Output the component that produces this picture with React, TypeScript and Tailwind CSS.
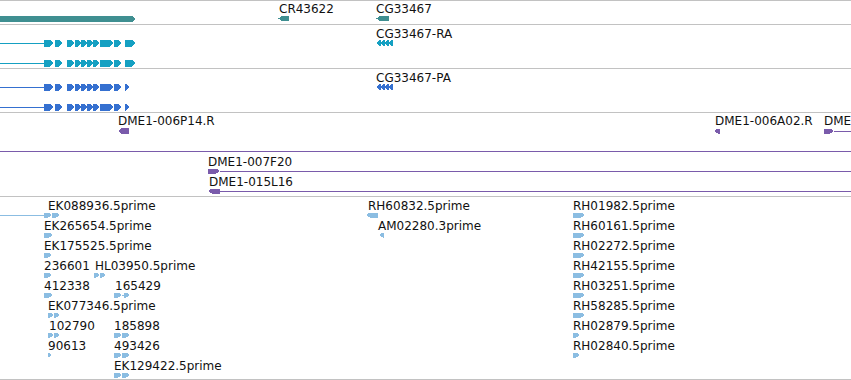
import type { ReactNode } from 'react'

const GENE = '#3f8f91'
const RA = '#15a0c2'
const PA = '#3570d0'
const CLONE = '#7a5bab'
const EST = '#8bbde2'

// pentagon arrow pointing right / left
function fwd(x1: number, x2: number, yc: number, h = 6) {
  const head = Math.min(4, x2 - x1)
  const t = yc - h / 2
  const b = yc + h / 2
  return `${x1},${t} ${x2 - head},${t} ${x2},${yc} ${x2 - head},${b} ${x1},${b}`
}

function rev(x1: number, x2: number, yc: number, h = 6) {
  const head = Math.min(4, x2 - x1)
  const t = yc - h / 2
  const b = yc + h / 2
  return `${x2},${t} ${x1 + head},${t} ${x1},${yc} ${x1 + head},${b} ${x2},${b}`
}

const EXONS: [number, number][] = [
  [44, 54], [55, 63], [67, 75], [75, 82], [81, 88], [87, 94], [93, 100], [100, 114], [114, 122], [125, 136],
]
const EXONS_PA: [number, number][] = [...EXONS.slice(0, 9), [125, 130]]
const LABEL_ARROWS: [number, number][] = [[376, 381], [380, 385], [384, 389], [388, 393]]

type Lbl = { x: number; base: number; text: string }

function Track({ top, h, hClass, last, labels, children }: { top: number; h: number; hClass: string; last?: boolean; labels: Lbl[]; children: ReactNode }) {
  return (
    <div className={`relative w-full overflow-hidden border-t border-[#c2c2c2] ${hClass} ${last ? 'border-b' : ''}`}>
      <svg
        className="absolute left-0 top-[-1px]"
        width={851}
        height={h}
        viewBox={`0 ${top} 851 ${h}`}
        shapeRendering="crispEdges"
      >
        {children}
      </svg>
      {labels.map((l) => (
        <span
          key={l.text + l.x}
          className="absolute whitespace-nowrap text-[12px] leading-[14px] text-[#111]"
          style={{ left: l.x, top: l.base - 11 - top - 1 }}
        >
          {l.text}
        </span>
      ))}
    </div>
  )
}

function Transcript({ exons, yc, color }: { exons: [number, number][]; yc: number; color: string }) {
  return (
    <g fill={color}>
      <rect x={0} y={yc - 0.5} width={44} height={1.2} />
      {exons.map(([a, b]) => (
        <polygon key={a} points={fwd(a, b, yc, 7)} />
      ))}
    </g>
  )
}

const EST_LEFT: Lbl[] = [
  { x: 48, base: 210, text: 'EK088936.5prime' },
  { x: 44, base: 230, text: 'EK265654.5prime' },
  { x: 44, base: 250, text: 'EK175525.5prime' },
  { x: 44, base: 270, text: '236601' },
  { x: 95, base: 270, text: 'HL03950.5prime' },
  { x: 44, base: 290, text: '412338' },
  { x: 115, base: 290, text: '165429' },
  { x: 48, base: 310, text: 'EK077346.5prime' },
  { x: 49, base: 330, text: '102790' },
  { x: 114, base: 330, text: '185898' },
  { x: 48, base: 350, text: '90613' },
  { x: 114, base: 350, text: '493426' },
  { x: 114, base: 370, text: 'EK129422.5prime' },
  { x: 368, base: 210, text: 'RH60832.5prime' },
  { x: 378, base: 230, text: 'AM02280.3prime' },
]

const RH = ['RH01982.5prime', 'RH60161.5prime', 'RH02272.5prime', 'RH42155.5prime', 'RH03251.5prime', 'RH58285.5prime', 'RH02879.5prime', 'RH02840.5prime']

// est glyphs: [x1, x2, row]
const EST_SHAPES: [number, number, number][] = [
  [44, 52, 0], [52, 60, 0],
  [44, 53, 1],
  [44, 52, 2],
  [44, 52, 3], [94, 100, 3], [100, 106, 3],
  [44, 53, 4], [114, 122, 4], [124, 130, 4],
  [48, 54, 5], [54, 60, 5],
  [48, 54, 6], [54, 60, 6], [114, 122, 6], [122, 130, 6],
  [48, 52, 7], [114, 122, 7], [122, 130, 7],
  [114, 122, 8], [122, 130, 8],
]

export default function App() {
  return (
    <div className="w-[851px] h-[380px] bg-white overflow-hidden font-['DejaVu_Sans',sans-serif]">
      <Track
        top={0}
        h={24}
        hClass="h-[24px]"
        labels={[
          { x: 279, base: 13, text: 'CR43622' },
          { x: 376, base: 13, text: 'CG33467' },
        ]}
      >
        <g fill={GENE}>
          <polygon points={fwd(0, 136, 19, 6)} />
          <polygon points={rev(278, 289, 18.5, 5)} />
          <polygon points={rev(376, 389, 18.5, 5)} />
        </g>
      </Track>

      <Track top={24} h={44} hClass="h-[44px]" labels={[{ x: 376, base: 38, text: 'CG33467-RA' }]}>
        <Transcript exons={EXONS} yc={43} color={RA} />
        <Transcript exons={EXONS} yc={63} color={RA} />
        <g fill={RA}>
          {LABEL_ARROWS.map(([a, b]) => (
            <polygon key={a} points={rev(a, b, 43, 6)} />
          ))}
        </g>
      </Track>

      <Track top={68} h={44} hClass="h-[44px]" labels={[{ x: 376, base: 82, text: 'CG33467-PA' }]}>
        <Transcript exons={EXONS_PA} yc={87} color={PA} />
        <Transcript exons={EXONS_PA} yc={107} color={PA} />
        <g fill={PA}>
          {LABEL_ARROWS.map(([a, b]) => (
            <polygon key={a} points={rev(a, b, 87, 6)} />
          ))}
        </g>
      </Track>

      <Track
        top={112}
        h={84}
        hClass="h-[84px]"
        labels={[
          { x: 118, base: 125, text: 'DME1-006P14.R' },
          { x: 715, base: 125, text: 'DME1-006A02.R' },
          { x: 824, base: 125, text: 'DME' },
          { x: 208, base: 166, text: 'DME1-007F20' },
          { x: 209, base: 186, text: 'DME1-015L16' },
        ]}
      >
        <g fill={CLONE}>
          <polygon points={rev(118, 129, 131, 6)} />
          <polygon points={rev(714, 720, 131, 5)} />
          <polygon points={fwd(824, 834, 131, 5)} />
          <polygon points={fwd(208, 220, 171, 5)} />
          <polygon points={rev(208, 220, 191, 5)} />
          <rect x={834} y={130.5} width={17} height={1} />
          <rect x={0} y={150.5} width={851} height={1} />
          <rect x={220} y={170.5} width={631} height={1} />
          <rect x={220} y={190.5} width={631} height={1} />
        </g>
      </Track>

      <Track
        top={196}
        h={184}
        hClass="h-[184px]"
        last
        labels={[...EST_LEFT, ...RH.map((t, i) => ({ x: 573, base: 210 + i * 20, text: t }))]}
      >
        <g fill={EST}>
          <rect x={0} y={214.5} width={44} height={1} />
          <rect x={122} y={294.5} width={4} height={1} />
          {EST_SHAPES.map(([a, b, r]) => (
            <polygon key={`${a}-${r}`} points={fwd(a, b, 215 + r * 20, 5)} />
          ))}
          <polygon points={rev(366, 378, 215, 5)} />
          <polygon points={rev(379, 384, 235, 5)} />
          {RH.map((t, i) => (
            <polygon key={t} points={fwd(573, i < 6 ? 585 : 580, 215 + i * 20, 5)} />
          ))}
        </g>
      </Track>
    </div>
  )
}
